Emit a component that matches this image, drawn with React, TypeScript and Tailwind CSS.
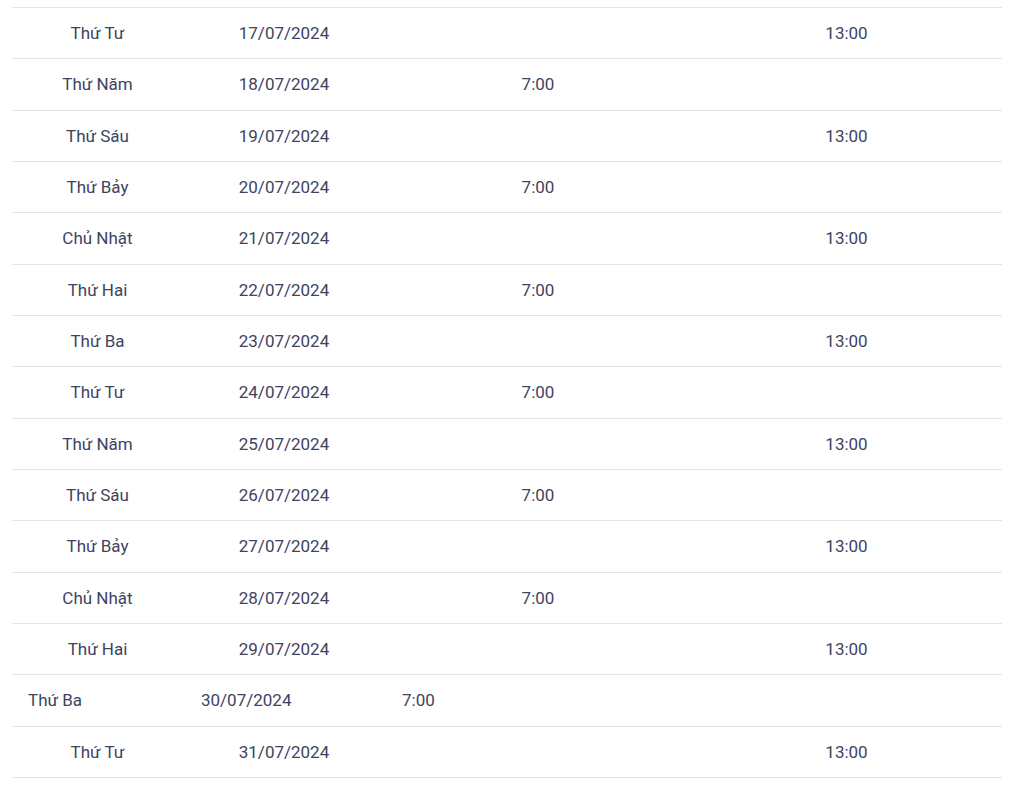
import React from 'react';

type Row = { day: string; date: string; morning?: string; afternoon?: string; plain?: boolean };

const rows: Row[] = [
  { day: 'Thứ Tư', date: '17/07/2024', afternoon: '13:00' },
  { day: 'Thứ Năm', date: '18/07/2024', morning: '7:00' },
  { day: 'Thứ Sáu', date: '19/07/2024', afternoon: '13:00' },
  { day: 'Thứ Bảy', date: '20/07/2024', morning: '7:00' },
  { day: 'Chủ Nhật', date: '21/07/2024', afternoon: '13:00' },
  { day: 'Thứ Hai', date: '22/07/2024', morning: '7:00' },
  { day: 'Thứ Ba', date: '23/07/2024', afternoon: '13:00' },
  { day: 'Thứ Tư', date: '24/07/2024', morning: '7:00' },
  { day: 'Thứ Năm', date: '25/07/2024', afternoon: '13:00' },
  { day: 'Thứ Sáu', date: '26/07/2024', morning: '7:00' },
  { day: 'Thứ Bảy', date: '27/07/2024', afternoon: '13:00' },
  { day: 'Chủ Nhật', date: '28/07/2024', morning: '7:00' },
  { day: 'Thứ Hai', date: '29/07/2024', afternoon: '13:00' },
  { day: 'Thứ Ba', date: '30/07/2024', morning: '7:00', plain: true },
  { day: 'Thứ Tư', date: '31/07/2024', afternoon: '13:00' },
];

export default function App() {
  return (
    <div className="bg-white min-h-[792px] pt-[7px] px-3 font-['Roboto',sans-serif] text-[17px] text-[#3e4361]">
      <div className="w-[990px] border-t border-[#e4e4ee]">
        {rows.map((r, i) =>
          r.plain ? (
            <div key={i} className="flex items-center h-[51.33px] pt-px border-b border-[#e4e4ee]">
              <div className="w-[171px] pl-4">{r.day}</div>
              <div className="w-[202px] pl-[18px]">{r.date}</div>
              <div className="w-[306px] pl-[17px]">{r.morning ?? ''}</div>
              <div className="w-[311px] pl-4">{r.afternoon ?? ''}</div>
            </div>
          ) : (
            <div key={i} className="flex items-center h-[51.33px] pt-px border-b border-[#e4e4ee] text-center">
              <div className="w-[171px]">{r.day}</div>
              <div className="w-[202px]">{r.date}</div>
              <div className="w-[306px]">{r.morning ?? ''}</div>
              <div className="w-[311px]">{r.afternoon ?? ''}</div>
            </div>
          )
        )}
      </div>
    </div>
  );
}
